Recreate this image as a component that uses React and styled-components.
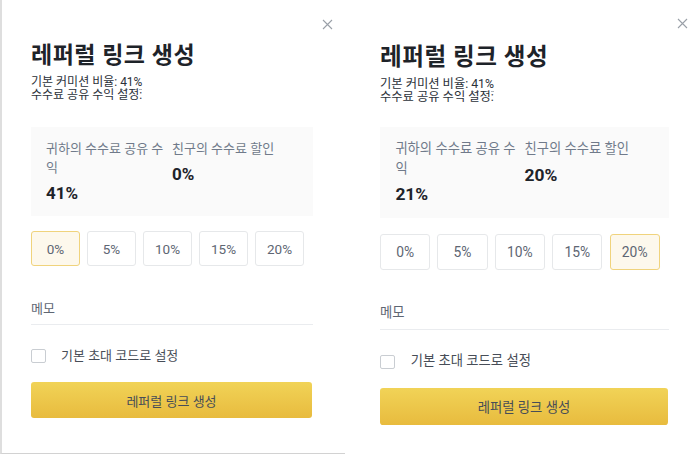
import React, { useState } from 'react'
import styled, { createGlobalStyle } from 'styled-components'

const GlobalStyle = createGlobalStyle`
  html, body {
    margin: 0;
    padding: 0;
    background: #fff;
  }
  body {
    font-family: Roboto, "Noto Sans CJK KR", sans-serif;
    color: #1e2329;
  }
`

const Page = styled.div`
  display: flex;
  width: 697px;
  height: 461px;
  overflow: hidden;
`

const Panel = styled.section`
  position: relative;
  box-sizing: border-box;
  flex: none;
  width: ${p => p.$width}px;
  height: 454px;
  padding-left: ${p => p.$padLeft}px;
  border-left: ${p => (p.$framed ? '2px solid #dedede' : 'none')};
  border-bottom: ${p => (p.$framed ? '1px solid #d2d2d2' : 'none')};
`

const Inner = styled.div`
  width: 282px;
  zoom: ${p => p.$zoom};
`

const CloseButton = styled.button`
  position: absolute;
  top: ${p => p.$top}px;
  right: ${p => p.$right}px;
  width: 12px;
  height: 12px;
  padding: 0;
  border: 0;
  background: none;
  display: flex;
  align-items: center;
  justify-content: center;
  cursor: pointer;
`

const Title = styled.h2`
  margin: 0;
  padding-top: 42px;
  font-size: 23px;
  line-height: 28px;
  letter-spacing: 0.5px;
  font-weight: 700;
  color: #1e2329;
`

const Info = styled.div`
  margin-top: 6px;
  font-size: 12px;
  line-height: 12.5px;
  color: #2b3139;
`

const Dashed = styled.span`
  border-bottom: 1px dashed #aeb4bc;
`

const ShareBox = styled.div`
  margin-top: ${p => p.$gap}px;
  padding: 12px 15px 11px;
  background: #fafafa;
  display: flex;
`

const ShareCol = styled.div`
  flex: 1;
  min-width: 0;
`

const ShareLabel = styled.div`
  font-size: 13px;
  line-height: 19px;
  color: #707a8a;
`

const ShareValue = styled.div`
  margin-top: 4px;
  font-size: 17px;
  line-height: 24px;
  font-weight: 700;
  color: #1e2329;
`

const RateRow = styled.div`
  display: flex;
  gap: 7px;
  margin-top: 15px;
`

const RateButton = styled.button`
  box-sizing: border-box;
  width: 49px;
  height: 35px;
  padding: 0;
  border: 1px solid ${p => (p.$active ? '#f0d37c' : '#e6e8ea')};
  border-radius: 3px;
  background: ${p => (p.$active ? '#fdf8ec' : '#fff')};
  font-family: inherit;
  font-size: 13.5px;
  color: #5e6673;
  cursor: pointer;
`

const MemoField = styled.label`
  display: block;
  margin-top: 33px;
  padding-bottom: 5px;
  border-bottom: 1px solid #eaecef;
  font-size: 13px;
  line-height: 20px;
  color: #5e6673;
`

const CheckRow = styled.label`
  display: flex;
  align-items: center;
  gap: 15px;
  margin-top: 21px;
  font-size: 13px;
  line-height: 20px;
  color: #474d57;
`

const CheckBox = styled.span`
  box-sizing: border-box;
  width: 15px;
  height: 14px;
  border: 1px solid #c9cdd2;
  border-radius: 2px;
  background: #fff;
`

const SubmitButton = styled.button`
  display: block;
  box-sizing: border-box;
  width: 281px;
  height: 36px;
  margin-top: 16px;
  border: 0;
  border-radius: 3px;
  background: linear-gradient(180deg, #f1d357 0%, #e8bb3e 100%);
  font-family: inherit;
  font-size: 13px;
  color: #474d57;
  cursor: pointer;
`

const rates = [0, 5, 10, 15, 20]

function CloseIcon () {
  return (
    <svg width='11' height='11' viewBox='0 0 11 11'>
      <path d='M1 1L10 10M10 1L1 10' stroke='#9aa0a8' strokeWidth='1.1' fill='none' />
    </svg>
  )
}

function ReferralModal ({ initialRate, framed, width, padLeft, zoom, gap, closeTop, closeRight }) {
  const [rate, setRate] = useState(initialRate)
  return (
    <Panel $framed={framed} $width={width} $padLeft={padLeft}>
      <CloseButton $top={closeTop} $right={closeRight} aria-label='close'>
        <CloseIcon />
      </CloseButton>
      <Inner $zoom={zoom}>
        <Title>레퍼럴 링크 생성</Title>
        <Info>
          <div>기본 커미션 비율: <Dashed>41%</Dashed></div>
          <div>수수료 공유 수익 설정:</div>
        </Info>
        <ShareBox $gap={gap}>
          <ShareCol>
            <ShareLabel>귀하의 수수료 공유 수익</ShareLabel>
            <ShareValue>{41 - rate}%</ShareValue>
          </ShareCol>
          <ShareCol>
            <ShareLabel>친구의 수수료 할인</ShareLabel>
            <ShareValue>{rate}%</ShareValue>
          </ShareCol>
        </ShareBox>
        <RateRow>
          {rates.map(r => (
            <RateButton key={r} $active={r === rate} onClick={() => setRate(r)}>{r}%</RateButton>
          ))}
        </RateRow>
        <MemoField>메모</MemoField>
        <CheckRow>
          <CheckBox />
          기본 초대 코드로 설정
        </CheckRow>
        <SubmitButton>레퍼럴 링크 생성</SubmitButton>
      </Inner>
    </Panel>
  )
}

export default function App () {
  return (
    <>
      <GlobalStyle />
      <Page>
        <ReferralModal initialRate={0} framed width={345} padLeft={29} zoom={1} gap={26} closeTop={18} closeRight={12} />
        <ReferralModal initialRate={20} width={352} padLeft={35} zoom={1.025} gap={23} closeTop={17} closeRight={9} />
      </Page>
    </>
  )
}
